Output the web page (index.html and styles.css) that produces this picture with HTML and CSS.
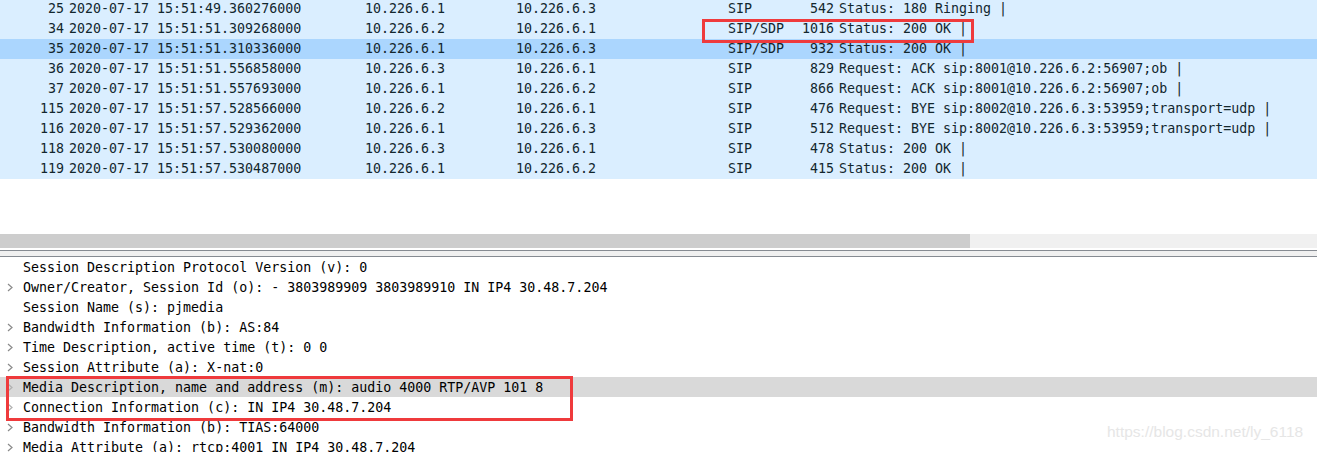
FILE: index.html
```html
<!DOCTYPE html>
<html>
<head>
<meta charset="utf-8">
<link rel="stylesheet" href="styles.css">
</head>
<body>
<div class="packet-list">
  <div class="row"><span class="no">25</span><span class="time">2020-07-17 15:51:49.360276000</span><span>10.226.6.1</span><span>10.226.6.3</span><span>SIP</span><span class="len">542</span><span class="info">Status: 180 Ringing |</span></div>
  <div class="row"><span class="no">34</span><span class="time">2020-07-17 15:51:51.309268000</span><span>10.226.6.2</span><span>10.226.6.1</span><span>SIP/SDP</span><span class="len">1016</span><span class="info">Status: 200 OK |</span></div>
  <div class="row selected"><span class="no">35</span><span class="time">2020-07-17 15:51:51.310336000</span><span>10.226.6.1</span><span>10.226.6.3</span><span>SIP/SDP</span><span class="len">932</span><span class="info">Status: 200 OK |</span></div>
  <div class="row"><span class="no">36</span><span class="time">2020-07-17 15:51:51.556858000</span><span>10.226.6.3</span><span>10.226.6.1</span><span>SIP</span><span class="len">829</span><span class="info">Request: ACK sip:8001@10.226.6.2:56907;ob |</span></div>
  <div class="row"><span class="no">37</span><span class="time">2020-07-17 15:51:51.557693000</span><span>10.226.6.1</span><span>10.226.6.2</span><span>SIP</span><span class="len">866</span><span class="info">Request: ACK sip:8001@10.226.6.2:56907;ob |</span></div>
  <div class="row"><span class="no">115</span><span class="time">2020-07-17 15:51:57.528566000</span><span>10.226.6.2</span><span>10.226.6.1</span><span>SIP</span><span class="len">476</span><span class="info">Request: BYE sip:8002@10.226.6.3:53959;transport=udp |</span></div>
  <div class="row"><span class="no">116</span><span class="time">2020-07-17 15:51:57.529362000</span><span>10.226.6.1</span><span>10.226.6.3</span><span>SIP</span><span class="len">512</span><span class="info">Request: BYE sip:8002@10.226.6.3:53959;transport=udp |</span></div>
  <div class="row"><span class="no">118</span><span class="time">2020-07-17 15:51:57.530080000</span><span>10.226.6.3</span><span>10.226.6.1</span><span>SIP</span><span class="len">478</span><span class="info">Status: 200 OK |</span></div>
  <div class="row"><span class="no">119</span><span class="time">2020-07-17 15:51:57.530487000</span><span>10.226.6.1</span><span>10.226.6.2</span><span>SIP</span><span class="len">415</span><span class="info">Status: 200 OK |</span></div>
</div>
<div class="list-empty"></div>
<div class="hscroll"><div class="thumb"></div><div class="track"></div></div>
<div class="splitter"></div>
<div class="tree">
  <div class="node"><span class="arrow"></span><span>Session Description Protocol Version (v): 0</span></div>
  <div class="node"><span class="arrow"><svg width="6" height="9" viewBox="0 0 6 9"><path d="M1 1 L5 4.5 L1 8" fill="none" stroke="#8a8a8a" stroke-width="1.2"/></svg></span><span>Owner/Creator, Session Id (o): - 3803989909 3803989910 IN IP4 30.48.7.204</span></div>
  <div class="node"><span class="arrow"></span><span>Session Name (s): pjmedia</span></div>
  <div class="node"><span class="arrow"><svg width="6" height="9" viewBox="0 0 6 9"><path d="M1 1 L5 4.5 L1 8" fill="none" stroke="#8a8a8a" stroke-width="1.2"/></svg></span><span>Bandwidth Information (b): AS:84</span></div>
  <div class="node"><span class="arrow"><svg width="6" height="9" viewBox="0 0 6 9"><path d="M1 1 L5 4.5 L1 8" fill="none" stroke="#8a8a8a" stroke-width="1.2"/></svg></span><span>Time Description, active time (t): 0 0</span></div>
  <div class="node"><span class="arrow"><svg width="6" height="9" viewBox="0 0 6 9"><path d="M1 1 L5 4.5 L1 8" fill="none" stroke="#8a8a8a" stroke-width="1.2"/></svg></span><span>Session Attribute (a): X-nat:0</span></div>
  <div class="node highlighted"><span class="arrow"><svg width="6" height="9" viewBox="0 0 6 9"><path d="M1 1 L5 4.5 L1 8" fill="none" stroke="#b0b0b0" stroke-width="1.2"/></svg></span><span>Media Description, name and address (m): audio 4000 RTP/AVP 101 8</span></div>
  <div class="node"><span class="arrow"><svg width="6" height="9" viewBox="0 0 6 9"><path d="M1 1 L5 4.5 L1 8" fill="none" stroke="#b0b0b0" stroke-width="1.2"/></svg></span><span>Connection Information (c): IN IP4 30.48.7.204</span></div>
  <div class="node"><span class="arrow"><svg width="6" height="9" viewBox="0 0 6 9"><path d="M1 1 L5 4.5 L1 8" fill="none" stroke="#8a8a8a" stroke-width="1.2"/></svg></span><span>Bandwidth Information (b): TIAS:64000</span></div>
  <div class="node"><span class="arrow"><svg width="6" height="9" viewBox="0 0 6 9"><path d="M1 1 L5 4.5 L1 8" fill="none" stroke="#8a8a8a" stroke-width="1.2"/></svg></span><span>Media Attribute (a): rtcp:4001 IN IP4 30.48.7.204</span></div>
</div>
<div class="mark mark-top"></div>
<div class="mark mark-bottom"></div>
<div class="watermark">https://blog.csdn.net/ly_6118</div>
</body>
</html>
```
FILE: styles.css
```css
html, body {
  margin: 0;
  padding: 0;
  background: #ffffff;
  overflow: hidden;
}
body {
  width: 1317px;
  height: 452px;
  position: relative;
  font-family: "DejaVu Sans Mono", "Liberation Mono", monospace;
  font-size: 13.3px;
}
.packet-list {
  margin-top: -1px;
  background: #daeeff;
  color: #12272e;
}
.row {
  display: grid;
  grid-template-columns: 64px 301px 151px 212px 48px 58px 1fr;
  height: 20px;
  line-height: 20px;
  white-space: pre;
}
.row.selected {
  background: #abd6fe;
}
.no, .len {
  text-align: right;
}
.time, .info {
  padding-left: 5px;
}
.list-empty {
  height: 55px;
}
.hscroll {
  display: flex;
  height: 14px;
}
.thumb {
  width: 970px;
  background: #cdcdcd;
}
.track {
  flex: 1;
  background: #f0f0f0;
}
.splitter {
  height: 5px;
  background: #f0f0f0;
  border-top: 1px solid #868b92;
  border-bottom: 1px solid #868b92;
  margin-top: 2px;
}
.tree {
  color: #000000;
}
.node {
  display: flex;
  align-items: center;
  height: 20px;
  line-height: 20px;
  white-space: pre;
}
.node > span:last-child {
  padding-top: 2px;
}
.node.highlighted {
  background: #d9d9d9;
}
.arrow {
  width: 23px;
  height: 20px;
  display: flex;
  align-items: center;
  padding-left: 7px;
  box-sizing: border-box;
}
.arrow svg {
  display: block;
}
.mark {
  position: absolute;
  border: 3px solid #ef3a3c;
  box-sizing: border-box;
}
.mark-top {
  left: 702px;
  top: 19px;
  width: 272px;
  height: 24px;
}
.mark-bottom {
  left: 6px;
  top: 376px;
  width: 567px;
  height: 45px;
}
.watermark {
  position: absolute;
  left: 1107px;
  top: 423px;
  font-family: "Liberation Sans", Arial, sans-serif;
  font-size: 15.5px;
  color: #e6e6e6;
  white-space: nowrap;
}
```
